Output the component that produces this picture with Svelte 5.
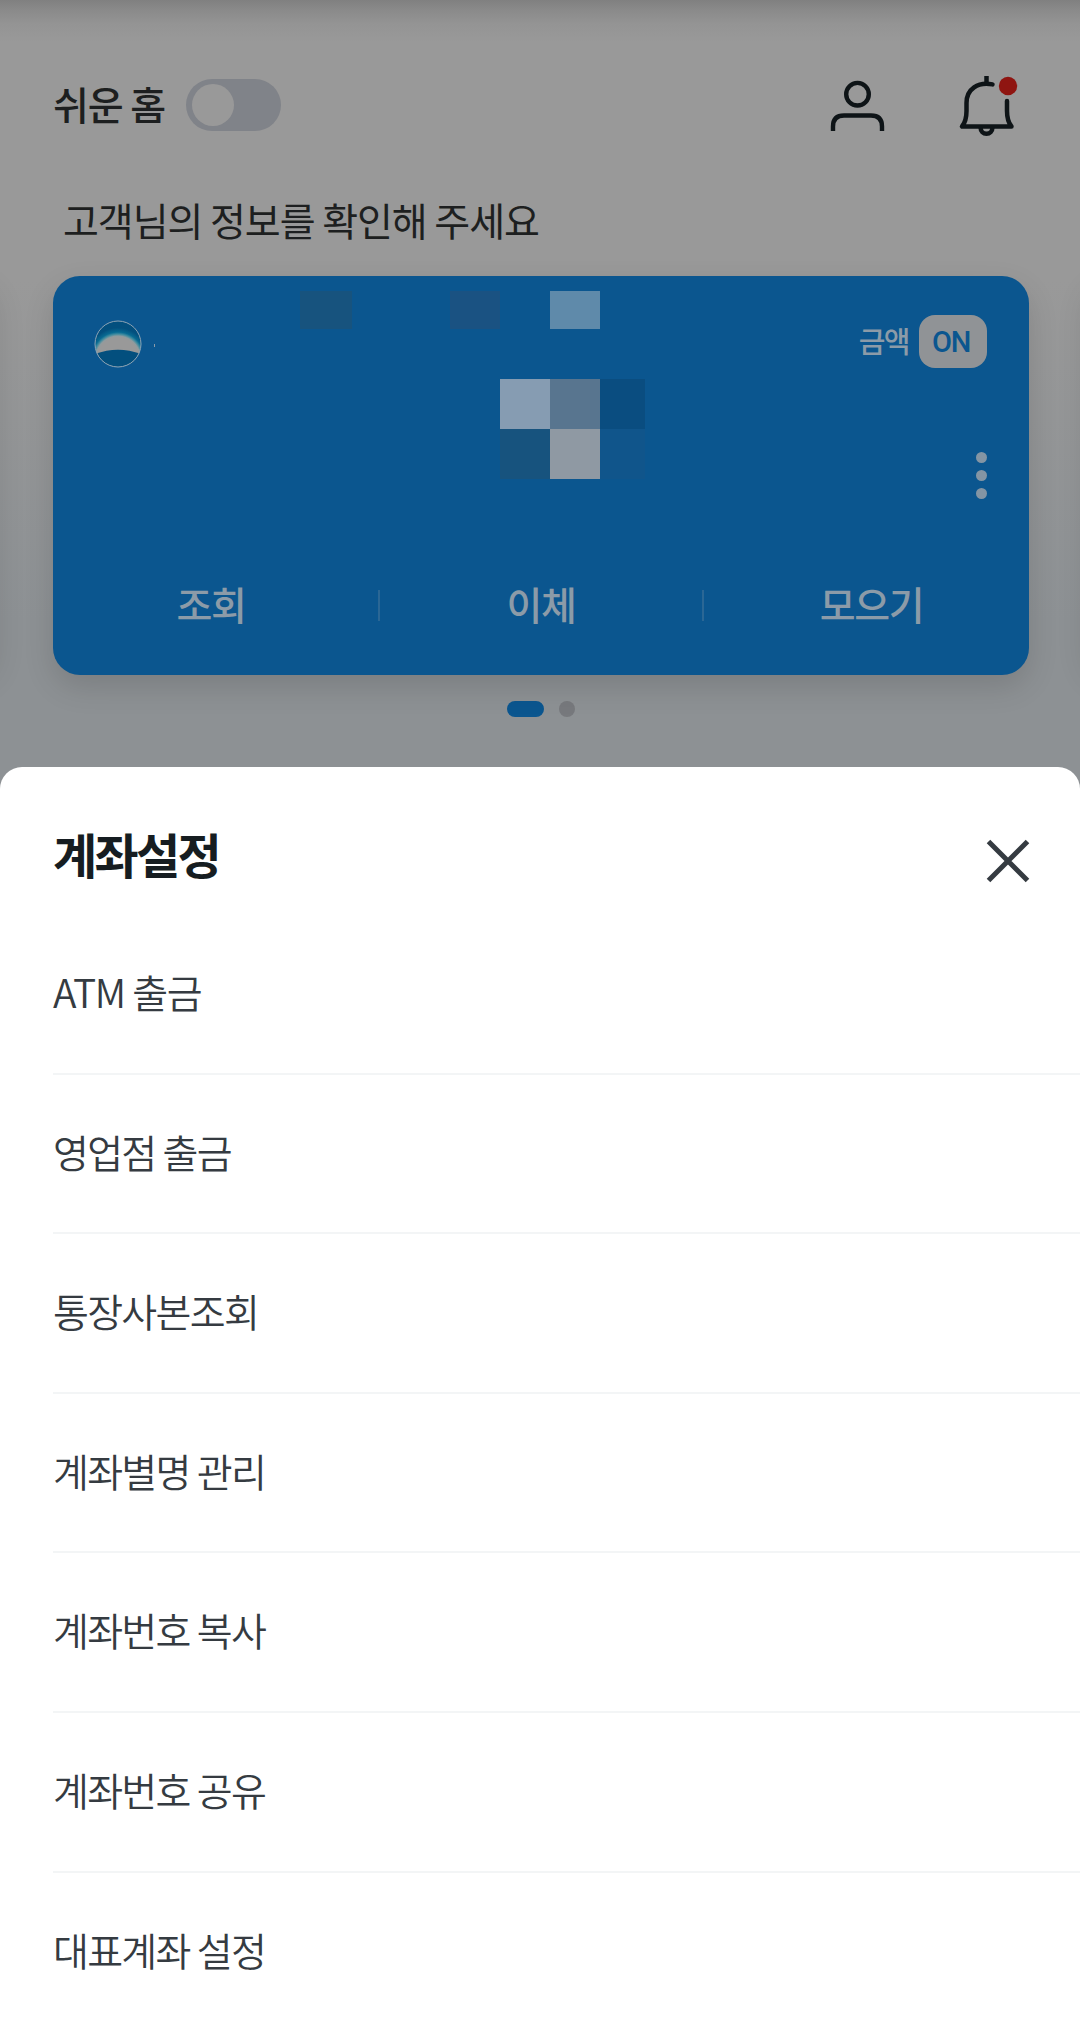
<script>
  const actions = ['조회', '이체', '모으기'];
  const menu = [
    'ATM 출금',
    '영업점 출금',
    '통장사본조회',
    '계좌별명 관리',
    '계좌번호 복사',
    '계좌번호 공유',
    '대표계좌 설정',
  ];
</script>

<div class="screen">
  <header>
    <span class="easy">쉬운 홈</span>
    <span class="toggle"><span class="knob"></span></span>
    <svg class="user" width="60" height="60" viewBox="0 0 60 60" fill="none" stroke="#0e1417" stroke-width="4.4">
      <circle cx="30.500" cy="19.200" r="11.3" />
      <path d="M6 56V51.500Q6 40.500 17 40.500H44Q55 40.500 55 51.500V56" />
    </svg>
    <svg class="bell" width="64" height="64" viewBox="0 0 64 64" fill="none" stroke="#0e1417" stroke-width="4.5">
      <path d="M30.500 1V10" />
      <path d="M36.500 9.400C22 6.500 10.500 14 10.500 28V36Q10.500 46 6 51.500H55.500Q51 46 51 36V26" stroke-linecap="round" stroke-linejoin="round" />
      <path d="M24.500 52C24.500 61 36.500 61 36.500 52" />
      <circle cx="52" cy="11" r="9.200" fill="#8f1511" stroke="none" />
    </svg>
  </header>

  <p class="greeting">고객님의 정보를 확인해 주세요</p>

  <div class="carousel">
    <div class="peek"></div>
    <section class="card">
      <div class="top">
        <svg width="48" height="48" viewBox="0 0 48 48">
          <defs>
            <radialGradient id="glow" gradientUnits="userSpaceOnUse" cx="24" cy="38.500" r="33">
              <stop offset="0.63" stop-color="#999" />
              <stop offset="0.68" stop-color="#8f9b9e" />
              <stop offset="0.74" stop-color="#3f8b9f" />
              <stop offset="0.8" stop-color="#086a92" />
              <stop offset="0.93" stop-color="#034f7e" />
            </radialGradient>
            <clipPath id="disc"><circle cx="24" cy="24" r="23" /></clipPath>
          </defs>
          <g clip-path="url(#disc)">
            <rect width="48" height="48" fill="url(#glow)" />
            <path d="M0 34.500Q24 25 48 34.500V48H0Z" fill="#034f7e" />
          </g>
          <circle cx="24" cy="24" r="23" fill="none" stroke="#8ea4b5" stroke-width="1" />
        </svg>
        <span class="tick"></span>
        <span class="amount">금액</span>
        <span class="on">ON</span>
      </div>
      <div class="kebab"><i></i><i></i><i></i></div>
      <div class="actions">
        {#each actions as action, i}
          {#if i > 0}<i class="rule"></i>{/if}
          <span>{action}</span>
        {/each}
      </div>
      <svg class="mosaic" width="345" height="188" viewBox="0 0 345 188" shape-rendering="crispEdges">
        <rect x="0" y="0" width="52" height="38" fill="#17537e" />
        <rect x="150" y="0" width="50" height="38" fill="#1a5282" />
        <rect x="250" y="0" width="50" height="38" fill="#5f8aaa" />
        <rect x="200" y="88" width="50" height="50" fill="#869cb2" />
        <rect x="250" y="88" width="50" height="50" fill="#58758f" />
        <rect x="300" y="88" width="45" height="50" fill="#0a4d80" />
        <rect x="200" y="138" width="50" height="50" fill="#17537e" />
        <rect x="250" y="138" width="50" height="50" fill="#8f99a3" />
        <rect x="300" y="138" width="45" height="50" fill="#10558b" />
      </svg>
    </section>
    <div class="peek"></div>
  </div>

  <div class="pager"><span class="current"></span><span></span></div>

  <section class="sheet">
    <div class="heading">
      <h1>계좌설정</h1>
      <svg width="44" height="44" viewBox="0 0 44 44" stroke="#353b41" stroke-width="5">
        <path d="M2.500 2.500L41.500 41.500M41.500 2.500L2.500 41.500" />
      </svg>
    </div>
    <ul>
      {#each menu as item}
        <li>{item}</li>
      {/each}
    </ul>
  </section>
</div>

<style>
  :global(body) {
    margin: 0;
    background: #fff;
  }
  .screen {
    width: 1080px;
    height: 2029px;
    overflow: hidden;
    display: flex;
    flex-direction: column;
    font-family: 'Noto Sans CJK KR', sans-serif;
    color: #1d1f20;
    background:
      linear-gradient(#808080, #8a8a8a 10px, #949494 24px, #99999900 42px) 0 0 / 100% 42px no-repeat,
      linear-gradient(#999 0, #999 280px, #8d9194 620px, #8d9194 100%);
  }
  .screen > * {
    flex-shrink: 0;
  }
  header {
    box-sizing: border-box;
    height: 184px;
    padding: 0 60px 0 53px;
    display: flex;
    align-items: flex-start;
  }
  .easy {
    margin-top: 74px;
    line-height: 58px;
    font-size: 39px;
    font-weight: 500;
    letter-spacing: -1.1px;
    white-space: nowrap;
    width: 133px;
  }
  .toggle {
    box-sizing: border-box;
    width: 95px;
    height: 52px;
    margin-top: 79px;
    padding: 5px 6px;
    border-radius: 26px;
    background: #808389;
  }
  .knob {
    display: block;
    width: 42px;
    height: 42px;
    border-radius: 50%;
    background: #999;
  }
  .user {
    margin: 75px 69px 0 auto;
  }
  .bell {
    margin-top: 75px;
  }
  .greeting {
    margin: 0;
    height: 92px;
    padding-left: 63px;
    line-height: 70px;
    font-size: 39px;
    letter-spacing: -1.05px;
  }
  .carousel {
    display: flex;
    gap: 56px;
    height: 399px;
    margin-left: -979px;
  }
  .peek {
    flex: 0 0 976px;
    border-radius: 27px;
    box-shadow: 0 9px 30px rgba(0, 0, 0, 0.1);
  }
  .card {
    flex: 0 0 976px;
    box-sizing: border-box;
    position: relative;
    display: flex;
    flex-direction: column;
    padding: 39px 42px 0 42px;
    border-radius: 27px;
    background: #0b568f;
    box-shadow: 0 12px 30px rgba(0, 0, 0, 0.13);
    color: #8c9ba8;
  }
  .top {
    display: flex;
    align-items: center;
    height: 53px;
  }
  .top svg {
    margin: 4px 1px 0 -1px;
  }
  .tick {
    width: 1px;
    height: 3px;
    margin: 8px 0 0 11px;
    background: #8c9ba8;
  }
  .amount {
    margin: -3px 0 0 auto;
    font-size: 29px;
    line-height: 44px;
    font-weight: 500;
    letter-spacing: -1.5px;
  }
  .on {
    box-sizing: border-box;
    width: 68px;
    height: 53px;
    padding-right: 4px;
    margin-left: 10px;
    border-radius: 16px;
    background: #909396;
    color: #0b568f;
    font: 500 29px/54px Roboto, sans-serif;
    letter-spacing: -1.3px;
    text-align: center;
  }
  .kebab {
    display: flex;
    flex-direction: column;
    align-items: flex-end;
    gap: 7px;
    margin-top: 84px;
  }
  .kebab i {
    width: 11px;
    height: 11px;
    border-radius: 50%;
    background: #8495a4;
  }
  .actions {
    display: flex;
    align-items: center;
    margin: 84px -42px 0;
  }
  .actions span {
    flex: 1;
    box-sizing: border-box;
    display: flex;
    align-items: center;
    justify-content: center;
    height: 40px;
    font-size: 39px;
    font-weight: 500;
    letter-spacing: -1.3px;
  }
  .actions span:first-child,
  .actions span:last-child {
    flex: 0 0 325px;
  }
  .actions span:first-child {
    padding-right: 9px;
  }
  .actions span:last-child {
    padding-left: 10px;
  }
  .rule {
    width: 2px;
    height: 31px;
    margin-top: 4px;
    background: #2b6795;
  }
  .mosaic {
    position: absolute;
    left: 247px;
    top: 15px;
  }
  .pager {
    display: flex;
    justify-content: center;
    gap: 15px;
    height: 66px;
    padding-top: 26px;
    margin-left: 2px;
  }
  .pager span {
    width: 16px;
    height: 16px;
    border-radius: 8px;
    background: #77797d;
  }
  .pager .current {
    width: 37px;
    background: #0b568f;
  }
  .sheet {
    height: 1262px;
    overflow: hidden;
    border-radius: 22px 22px 0 0;
    background: #fff;
    padding-left: 53px;
  }
  .heading {
    display: flex;
    align-items: flex-start;
    justify-content: space-between;
    height: 148px;
    padding-right: 50px;
  }
  h1 {
    margin: 51px 0 0;
    font-size: 48px;
    line-height: 71px;
    font-weight: 700;
    letter-spacing: -2.7px;
    color: #161d21;
  }
  .heading svg {
    margin-top: 72px;
  }
  ul {
    list-style: none;
    margin: 0;
    padding: 0;
  }
  li {
    box-sizing: border-box;
    height: 159.600px;
    border-bottom: 2px solid #f3f5f6;
    line-height: 153px;
    font-size: 39px;
    font-weight: 350;
    letter-spacing: -1.7px;
    color: #353b41;
  }
  li:first-child {
    letter-spacing: -1.3px;
  }
  li:last-child {
    border-bottom: 0;
  }
</style>
